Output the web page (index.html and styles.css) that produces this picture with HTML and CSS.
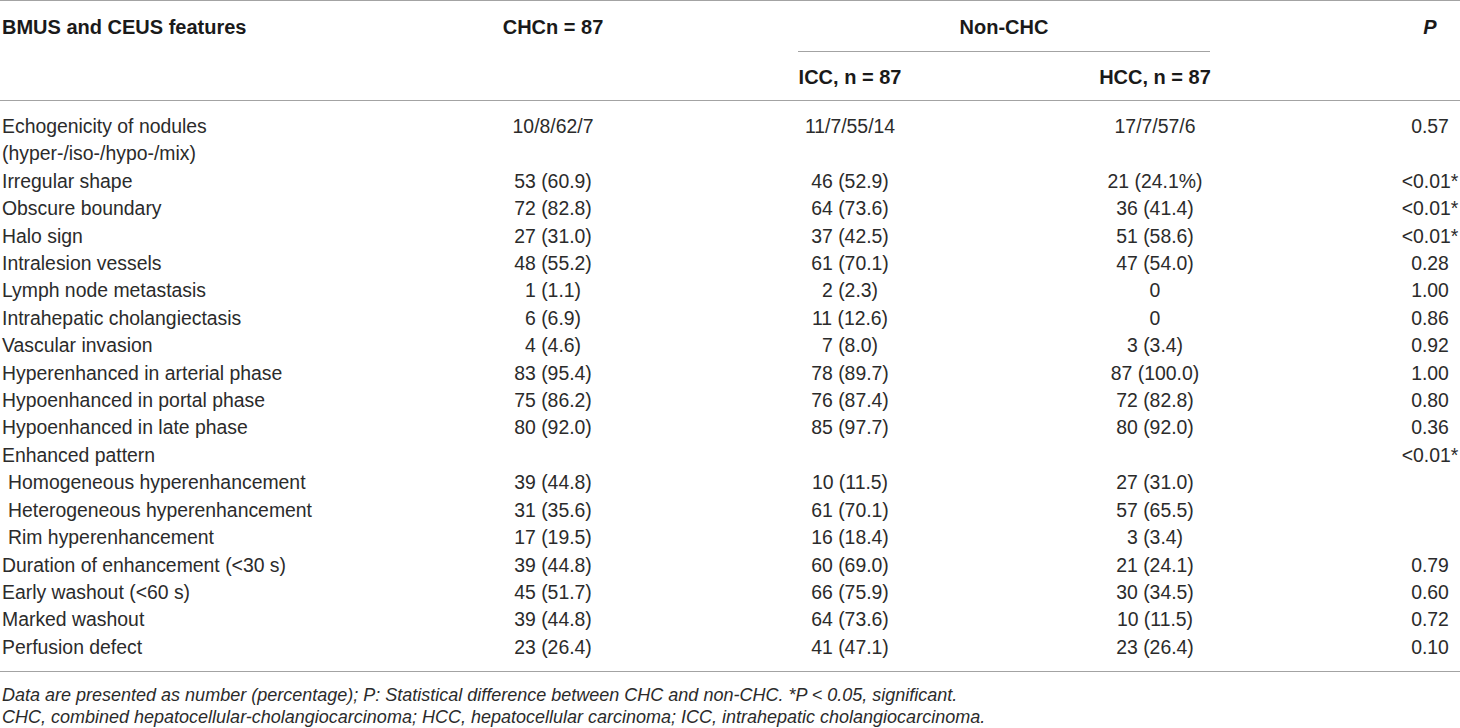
FILE: index.html
```html
<!DOCTYPE html>
<html lang="en">
  <head>
    <meta charset="UTF-8" />
    <meta name="viewport" content="width=device-width, initial-scale=1.0" />
    <title>BMUS and CEUS features</title>
    <link rel="stylesheet" href="styles.css">
  </head>
  <body>
    <main>
      <table class="features_table">
        <colgroup>
          <col class="col_feature" />
          <col class="col_chc" />
          <col class="col_icc" />
          <col class="col_hcc" />
          <col class="col_p" />
        </colgroup>
        <thead>
          <tr class="head_top">
            <th class="feature" rowspan="2">BMUS and CEUS features</th>
            <th rowspan="2">CHCn = 87</th>
            <th colspan="2"><div class="group_label">Non-CHC</div></th>
            <th rowspan="2"><i>P</i></th>
          </tr>
          <tr class="head_sub">
            <th>ICC, n = 87</th>
            <th>HCC, n = 87</th>
          </tr>
        </thead>
        <tbody>
          <tr>
            <td class="feature">Echogenicity of nodules<br />(hyper-/iso-/hypo-/mix)</td>
            <td>10/8/62/7</td>
            <td>11/7/55/14</td>
            <td>17/7/57/6</td>
            <td>0.57</td>
          </tr>
          <tr>
            <td class="feature">Irregular shape</td>
            <td>53 (60.9)</td>
            <td>46 (52.9)</td>
            <td>21 (24.1%)</td>
            <td>&lt;0.01*</td>
          </tr>
          <tr>
            <td class="feature">Obscure boundary</td>
            <td>72 (82.8)</td>
            <td>64 (73.6)</td>
            <td>36 (41.4)</td>
            <td>&lt;0.01*</td>
          </tr>
          <tr>
            <td class="feature">Halo sign</td>
            <td>27 (31.0)</td>
            <td>37 (42.5)</td>
            <td>51 (58.6)</td>
            <td>&lt;0.01*</td>
          </tr>
          <tr>
            <td class="feature">Intralesion vessels</td>
            <td>48 (55.2)</td>
            <td>61 (70.1)</td>
            <td>47 (54.0)</td>
            <td>0.28</td>
          </tr>
          <tr>
            <td class="feature">Lymph node metastasis</td>
            <td>1 (1.1)</td>
            <td>2 (2.3)</td>
            <td>0</td>
            <td>1.00</td>
          </tr>
          <tr>
            <td class="feature">Intrahepatic cholangiectasis</td>
            <td>6 (6.9)</td>
            <td>11 (12.6)</td>
            <td>0</td>
            <td>0.86</td>
          </tr>
          <tr>
            <td class="feature">Vascular invasion</td>
            <td>4 (4.6)</td>
            <td>7 (8.0)</td>
            <td>3 (3.4)</td>
            <td>0.92</td>
          </tr>
          <tr>
            <td class="feature">Hyperenhanced in arterial phase</td>
            <td>83 (95.4)</td>
            <td>78 (89.7)</td>
            <td>87 (100.0)</td>
            <td>1.00</td>
          </tr>
          <tr>
            <td class="feature">Hypoenhanced in portal phase</td>
            <td>75 (86.2)</td>
            <td>76 (87.4)</td>
            <td>72 (82.8)</td>
            <td>0.80</td>
          </tr>
          <tr>
            <td class="feature">Hypoenhanced in late phase</td>
            <td>80 (92.0)</td>
            <td>85 (97.7)</td>
            <td>80 (92.0)</td>
            <td>0.36</td>
          </tr>
          <tr>
            <td class="feature">Enhanced pattern</td>
            <td></td>
            <td></td>
            <td></td>
            <td>&lt;0.01*</td>
          </tr>
          <tr>
            <td class="feature sub">Homogeneous hyperenhancement</td>
            <td>39 (44.8)</td>
            <td>10 (11.5)</td>
            <td>27 (31.0)</td>
            <td></td>
          </tr>
          <tr>
            <td class="feature sub">Heterogeneous hyperenhancement</td>
            <td>31 (35.6)</td>
            <td>61 (70.1)</td>
            <td>57 (65.5)</td>
            <td></td>
          </tr>
          <tr>
            <td class="feature sub">Rim hyperenhancement</td>
            <td>17 (19.5)</td>
            <td>16 (18.4)</td>
            <td>3 (3.4)</td>
            <td></td>
          </tr>
          <tr>
            <td class="feature">Duration of enhancement (&lt;30 s)</td>
            <td>39 (44.8)</td>
            <td>60 (69.0)</td>
            <td>21 (24.1)</td>
            <td>0.79</td>
          </tr>
          <tr>
            <td class="feature">Early washout (&lt;60 s)</td>
            <td>45 (51.7)</td>
            <td>66 (75.9)</td>
            <td>30 (34.5)</td>
            <td>0.60</td>
          </tr>
          <tr>
            <td class="feature">Marked washout</td>
            <td>39 (44.8)</td>
            <td>64 (73.6)</td>
            <td>10 (11.5)</td>
            <td>0.72</td>
          </tr>
          <tr>
            <td class="feature">Perfusion defect</td>
            <td>23 (26.4)</td>
            <td>41 (47.1)</td>
            <td>23 (26.4)</td>
            <td>0.10</td>
          </tr>
        </tbody>
      </table>
      <div class="table_notes">
        <p>Data are presented as number (percentage); P: Statistical difference between CHC and non-CHC. *P &lt; 0.05, significant.</p>
        <p>CHC, combined hepatocellular-cholangiocarcinoma; HCC, hepatocellular carcinoma; ICC, intrahepatic cholangiocarcinoma.</p>
      </div>
    </main>
  </body>
</html>
```

FILE: styles.css
```css
body {
  margin: 0;

  --text: #2b2b2b;
  --heading: #1a1a1a;
  --rule: #a3a3a3;

  font-family: "Liberation Sans", Arial, sans-serif;
  color: var(--text);
  background-color: #ffffff;
}

main {
  width: 100%;
}

.features_table {
  width: 100%;
  border-collapse: collapse;
  table-layout: fixed;
  border-top: 1px solid var(--rule);
  font-size: 19.4px;
  line-height: 27.4px;
}

.col_feature {
  width: 316px;
}

.col_chc {
  width: 474px;
}

.col_icc {
  width: 120px;
}

.col_hcc {
  width: 490px;
}

.col_p {
  width: 60px;
}

thead {
  border-bottom: 1px solid var(--rule);
}

th {
  font-size: 20px;
  font-weight: bold;
  color: var(--heading);
  text-align: center;
  vertical-align: top;
  line-height: 27px;
  padding: 0;
  white-space: nowrap;
}

.head_top th {
  padding-top: 13px;
}

.group_label {
  margin: 0 190px 0 8px;
  padding-bottom: 10px;
  border-bottom: 1px solid var(--rule);
}

.head_sub th {
  padding: 12px 0 9px;
}

td {
  text-align: center;
  vertical-align: top;
  padding: 0;
  white-space: nowrap;
}

.feature {
  text-align: left;
  padding-left: 2px;
}

td.sub {
  padding-left: 8px;
}

tbody tr:first-child td {
  padding-top: 12px;
}

tbody tr:last-child td {
  padding-bottom: 10px;
}

tbody {
  border-bottom: 1px solid var(--rule);
}

.table_notes {
  padding: 11px 2px 0;
}

.table_notes p {
  margin: 0;
  font-size: 18px;
  line-height: 24px;
  font-style: italic;
}

.table_notes p:last-child {
  line-height: 20px;
}
```
